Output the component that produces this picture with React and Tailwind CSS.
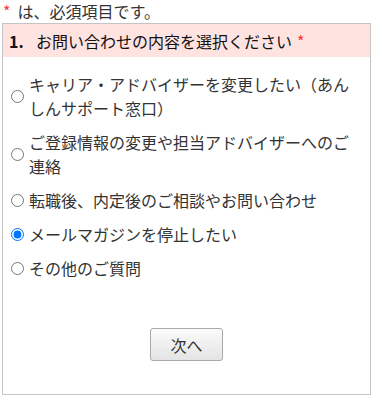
import React from "react";

const options = [
  "キャリア・アドバイザーを変更したい（あんしんサポート窓口）",
  "ご登録情報の変更や担当アドバイザーへのご連絡",
  "転職後、内定後のご相談やお問い合わせ",
  "メールマガジンを停止したい",
  "その他のご質問",
];

export default function App() {
  return (
    <div
      className="w-[373px] h-[400px] bg-white px-[2px] text-[16px] text-[#333333]"
      style={{ fontFamily: '"Noto Sans CJK JP", "Noto Sans", sans-serif' }}
    >
      <p className="h-[23px] leading-[23px] pl-[1px] flex">
        <span className="text-[#ff3333]">*</span>
        <span className="ml-[7px]">は、必須項目です。</span>
      </p>
      <div className="w-[369px] border border-[#c4c4c4]">
        <div className="h-[33px] bg-[#ffe3e1] flex items-center pl-[6px] text-[#111111]">
          <span className="font-bold w-[27px]">1.</span>
          <span>お問い合わせの内容を選択ください</span>
          <span className="text-[#ff3333] ml-[5px]">*</span>
        </div>
        <div className="pt-[10px]">
          {options.map((o, i) => (
            <label key={i} className="flex items-center py-[5px] pl-[8px] pr-[10px]">
              <input
                type="radio"
                name="q1"
                defaultChecked={i === 3}
                className="m-0 w-[13px] h-[13px] shrink-0 mr-[5px]"
              />
              <span className="leading-[24px] w-[324px]">{o}</span>
            </label>
          ))}
        </div>
        <div className="flex justify-center pt-[43px] pb-[33px]">
          <button className="w-[73px] h-[33px] rounded-[3px] border border-[#a9a9a9] bg-gradient-to-b from-[#fbfbfb] to-[#e4e4e4] text-[16px] text-[#333333]">
            次へ
          </button>
        </div>
      </div>
    </div>
  );
}
